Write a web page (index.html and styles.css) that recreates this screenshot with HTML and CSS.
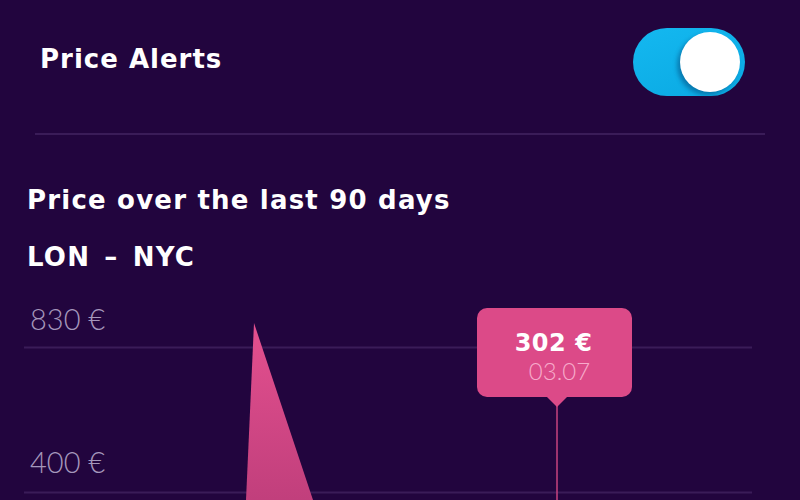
FILE: index.html
```html
<!DOCTYPE html>
<html>
<head>
  <title>Price Alerts</title>
  <link rel="stylesheet" href="styles.css">
</head>
<body>
  <div class="screen">

    <!-- Alert switch row -->
    <div class="alert-row">
      <h2 class="alert-title">Price Alerts</h2>
      <div class="toggle">
        <div class="toggle-knob"></div>
      </div>
    </div>

    <hr class="divider">

    <!-- Chart heading -->
    <div class="chart-head">
      <h1 class="chart-title">Price over the last 90 days</h1>
      <div class="chart-route">LON &ndash; NYC</div>
    </div>

    <!-- Chart -->
    <div class="chart">
      <svg class="chart-lines" width="800" height="200" viewBox="0 0 800 200">
        <defs>
          <linearGradient id="spike-fill" x1="0" y1="0" x2="0" y2="1">
            <stop offset="0" stop-color="#e4508f"/>
            <stop offset="1" stop-color="#c13f7c"/>
          </linearGradient>
        </defs>
        <line x1="24" y1="47.5" x2="752" y2="47.5" stroke="#3a1c58" stroke-width="2"/>
        <line x1="24" y1="192.5" x2="752" y2="192.5" stroke="#3a1c58" stroke-width="2"/>
        <polygon points="254,23 246,200 313,200" fill="url(#spike-fill)"/>
        <line x1="557" y1="104" x2="557" y2="200" stroke="#c9437f" stroke-width="1.5"/>
      </svg>

      <div class="axis">
        <div class="axis-label">830 €</div>
        <div class="axis-label">400 €</div>
      </div>

      <div class="tooltip">
        <div class="tooltip-price">302 €</div>
        <div class="tooltip-date">03.07</div>
      </div>
    </div>

  </div>
</body>
</html>
```

FILE: styles.css
```css
body {
  background-color: #22053e;
  margin: 0;
  padding: 0;
  font-family: "DejaVu Sans", "Open Sans", sans-serif;
  color: #FFFFFF;
}

.screen {
  width: 800px;
  height: 500px;
  overflow: hidden;
}

.alert-row {
  display: flex;
  align-items: center;
  justify-content: space-between;
  height: 124px;
  padding: 0 55px 0 40px;
}

.alert-title {
  margin: 0 0 6px 0;
  font-size: 26px;
  font-weight: 700;
  letter-spacing: 1px;
}

.toggle {
  width: 112px;
  height: 68px;
  border-radius: 34px;
  background: linear-gradient(160deg, #14b8f0, #0aa9e2);
  display: flex;
  align-items: center;
  justify-content: flex-end;
  padding-right: 5px;
  box-sizing: border-box;
}

.toggle-knob {
  width: 60px;
  height: 60px;
  border-radius: 50%;
  background-color: #FFFFFF;
  box-shadow: -3px 3px 4px rgba(0, 60, 110, 0.45);
}

.divider {
  margin: 9px 35px 0 35px;
  border: none;
  height: 2px;
  background-color: #3a1c58;
}

.chart-head {
  padding: 50px 0 0 27px;
}

.chart-title,
.chart-route {
  margin: 0;
  font-size: 26px;
  font-weight: 700;
  line-height: 30px;
  letter-spacing: 1.2px;
}

.chart-route {
  margin-top: 27px;
  word-spacing: 4px;
}

.chart {
  position: relative;
  height: 200px;
  margin-top: 28px;
}

.chart-lines {
  position: absolute;
  top: 0;
  left: 0;
}

.axis {
  position: relative;
  display: flex;
  flex-direction: column;
  gap: 111px;
  padding: 3px 0 0 30px;
}

.axis-label {
  font-family: "Lato", "Liberation Sans", sans-serif;
  font-weight: 300;
  font-size: 29px;
  line-height: 32px;
  color: #a597bb;
}

.tooltip {
  position: absolute;
  left: 477px;
  top: 8px;
  width: 155px;
  height: 89px;
  border-radius: 10px;
  background-color: #dc4a88;
  text-align: center;
  box-sizing: border-box;
  padding-top: 21px;
}

.tooltip::after {
  content: "";
  position: absolute;
  left: 70px;
  bottom: -10px;
  border-left: 10px solid transparent;
  border-right: 10px solid transparent;
  border-top: 10px solid #dc4a88;
}

.tooltip-price {
  font-size: 24px;
  font-weight: 700;
  line-height: 28px;
  letter-spacing: 0.5px;
  margin-left: -2px;
}

.tooltip-date {
  font-family: "Lato", "Liberation Sans", sans-serif;
  font-weight: 300;
  font-size: 24px;
  line-height: 28px;
  color: #f7aacb;
  margin-left: 10px;
}
```
